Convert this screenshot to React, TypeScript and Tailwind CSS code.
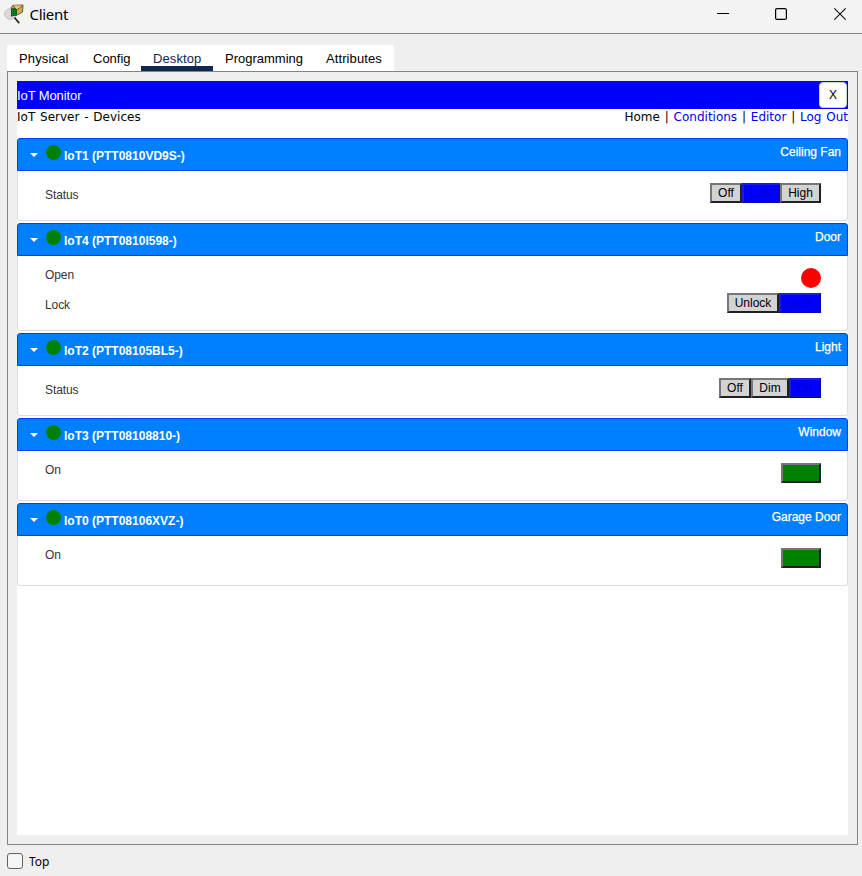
import React from "react";

type Device = {
  name: string;
  serial: string;
  type: string;
  height: string;
  rows: { label: string; offset: string; control: React.ReactNode }[];
};

const raised = "h-5 shrink-0 border-2 border-t-[#767676] border-l-[#767676] border-b-[#212121] border-r-[#212121]";

function Choice({ label, width, active }: { label: string; width: string; active?: boolean }) {
  return (
    <button
      className={
        active
          ? `h-5 shrink-0 border-2 border-t-[#1c1cdc] border-l-[#1c1cdc] border-b-[#0808b8] border-r-[#0808b8] bg-[#0000ff] text-center text-[12px] leading-4 text-[#0000cf] ${width}`
          : `${raised} bg-[#d3d3d3] text-center text-[12px] leading-4 text-black ${width}`
      }
    >
      {label}
    </button>
  );
}

const toggle = <button className={`${raised} w-10 bg-[#008000]`} />;

const devices: Device[] = [
  {
    name: "IoT1", serial: "PTT0810VD9S-", type: "Ceiling Fan", height: "h-[50px]",
    rows: [{ label: "Status", offset: "pt-[12px]", control: <><Choice label="Off" width="w-8" /><Choice label="Low" width="w-[38px]" active /><Choice label="High" width="w-[41px]" /></> }],
  },
  {
    name: "IoT4", serial: "PTT0810I598-", type: "Door", height: "h-[75px]",
    rows: [
      { label: "Open", offset: "pt-[7px]", control: <span className="mt-[5px] size-5 rounded-full bg-[#ff0000]" /> },
      { label: "Lock", offset: "pt-[5px]", control: <><Choice label="Unlock" width="w-[52px]" /><Choice label="Lock" width="w-[42px]" active /></> },
    ],
  },
  {
    name: "IoT2", serial: "PTT08105BL5-", type: "Light", height: "h-[50px]",
    rows: [{ label: "Status", offset: "pt-[12px]", control: <><Choice label="Off" width="w-8" /><Choice label="Dim" width="w-[38px]" /><Choice label="On" width="w-8" active /></> }],
  },
  { name: "IoT3", serial: "PTT08108810-", type: "Window", height: "h-[50px]", rows: [{ label: "On", offset: "pt-[7px]", control: <span className="mt-[5px] flex">{toggle}</span> }] },
  { name: "IoT0", serial: "PTT08106XVZ-", type: "Garage Door", height: "h-[50px]", rows: [{ label: "On", offset: "pt-[7px]", control: <span className="mt-[5px] flex">{toggle}</span> }] },
];

function DeviceCard({ device }: { device: Device }) {
  return (
    <section className="mb-[2px]">
      <header className="flex h-[33px] rounded-t-[3px] border border-[#003eff] bg-[#007fff] pr-[6px] pl-3 text-white">
        <svg className="mt-[14px] h-1 w-2" viewBox="0 0 8 4"><path d="M0 0h8L4 4z" fill="white" /></svg>
        <span className="mt-[6px] ml-2 size-[15px] rounded-full bg-[#008000]" />
        <span className="mt-[9px] ml-[3px] text-[12px] leading-4 font-bold whitespace-nowrap">{device.name} ({device.serial})</span>
        <span className="mt-[5px] ml-auto text-[12px] leading-4 [-webkit-text-stroke:0.25px_white]">{device.type}</span>
      </header>
      <div className={`rounded-b-[3px] border border-t-0 border-[#dddddd] pr-[26px] pl-[27px] ${device.height}`}>
        {device.rows.map((row) => (
          <div key={row.label} className={`flex justify-between text-[12px] text-[#333333] ${row.offset}`}>
            <span className="mt-1 leading-4 tracking-[-0.1px]">{row.label}</span>
            <div className="flex">{row.control}</div>
          </div>
        ))}
      </div>
    </section>
  );
}

function AppIcon() {
  return (
    <svg className="h-6 w-[22px]" viewBox="0 0 22 24">
      <path d="M6 5 9 1.3 19 1 18.5 8 13 11 6 10Z" fill="#d9a94e" stroke="#4b3715" strokeWidth=".8" />
      <path d="m9 1.5 3.5 4.5L19 1.5" fill="#ecca79" stroke="#5a421c" strokeWidth=".8" />
      <ellipse cx="6.3" cy="10" rx="5.8" ry="5.3" fill="#d9dad8" stroke="#c4c6c4" />
      <path d="M7 4.5q4-1 6 1v6l-6 1z" fill="#06430f" />
      <path d="M7.5 6.5H13M7 8.5h6M7 10.5h6M8.5 5v7M10.5 5v7" stroke="#159c30" strokeWidth=".6" />
      <path d="m10.5 13.5 4.7 5.7" stroke="#222" strokeWidth="1.8" />
    </svg>
  );
}

export default function App() {
  return (
    <main className="flex h-[876px] w-[862px] flex-col overflow-hidden bg-[#efefef] font-['Liberation_Sans',sans-serif] text-black">
      <div className="flex h-[34px] shrink-0 border-b border-[#808389] bg-[#f3f3f3] pl-1">
        <div className="mt-[4px]"><AppIcon /></div>
        <span className="mt-[3px] ml-[3.5px] font-['Noto_Sans',sans-serif] text-[15px] leading-[22px] tracking-[-0.3px]">Client</span>
        <div className="mt-[7px] mr-4 ml-auto flex">
          <svg className="h-[14px] w-3" viewBox="0 0 12 14"><path d="M0 6.5h12" stroke="black" /></svg>
          <svg className="ml-[46px] h-[14px] w-3" viewBox="0 0 12 14"><rect x=".6" y="1.6" width="10.8" height="10.8" rx="1.5" fill="none" stroke="black" strokeWidth="1.2" /></svg>
          <svg className="ml-[47px] h-[14px] w-3" viewBox="0 0 12 14"><path d="m.3 1.3 11.4 11.4m0-11.4L.3 12.7" stroke="black" strokeWidth="1.1" /></svg>
        </div>
      </div>
      <nav className="mt-[11px] ml-[7px] flex h-[26px] w-[387px] shrink-0 bg-white text-[13px] leading-[27px]">
        <span className="w-[74px] pl-3 tracking-[0.15px]">Physical</span>
        <span className="w-[60px] pl-3">Config</span>
        <span className="w-[72px] border-b-[5px] border-[#0d274d] pl-3 tracking-[0.1px] text-[#0d274d]">Desktop</span>
        <span className="w-[101px] pl-3">Programming</span>
        <span className="w-[80px] pl-3 tracking-[0.1px]">Attributes</span>
      </nav>
      <div className="ml-[7px] h-[774px] w-[851px] shrink-0 border border-[#808389] p-[9px]">
        <div className="h-[754px] w-[831px] bg-white">
          <div className="flex h-7 items-center justify-between bg-[#0000ff] text-[13px] text-white">
            <span className="mt-px leading-4 tracking-[-0.1px]">IoT Monitor</span>
            <button className="mr-px h-[26px] w-7 rounded-[4px] border border-[#d0d0d0] bg-[#fdfdfd] text-[12px] text-black">X</button>
          </div>
          <div className="flex h-[29px] justify-between font-['DejaVu_Sans',sans-serif] text-[12px] leading-4 whitespace-pre [word-spacing:1px]">
            <span>IoT Server - Devices</span>
            <span>Home | <a className="text-[#0000ee]">Conditions</a> | <a className="text-[#0000ee]">Editor</a> | <a className="text-[#0000ee]">Log Out</a></span>
          </div>
          {devices.map((device) => <DeviceCard key={device.name} device={device} />)}
        </div>
      </div>
      <label className="mt-[7px] ml-[7px] flex h-[18px] items-center font-['Noto_Sans',sans-serif] text-[12px]">
        <span className="size-4 rounded-[3px] border border-[#626262] bg-[#f5f5f5]" />
        <span className="mt-px ml-[6px]">Top</span>
      </label>
    </main>
  );
}
